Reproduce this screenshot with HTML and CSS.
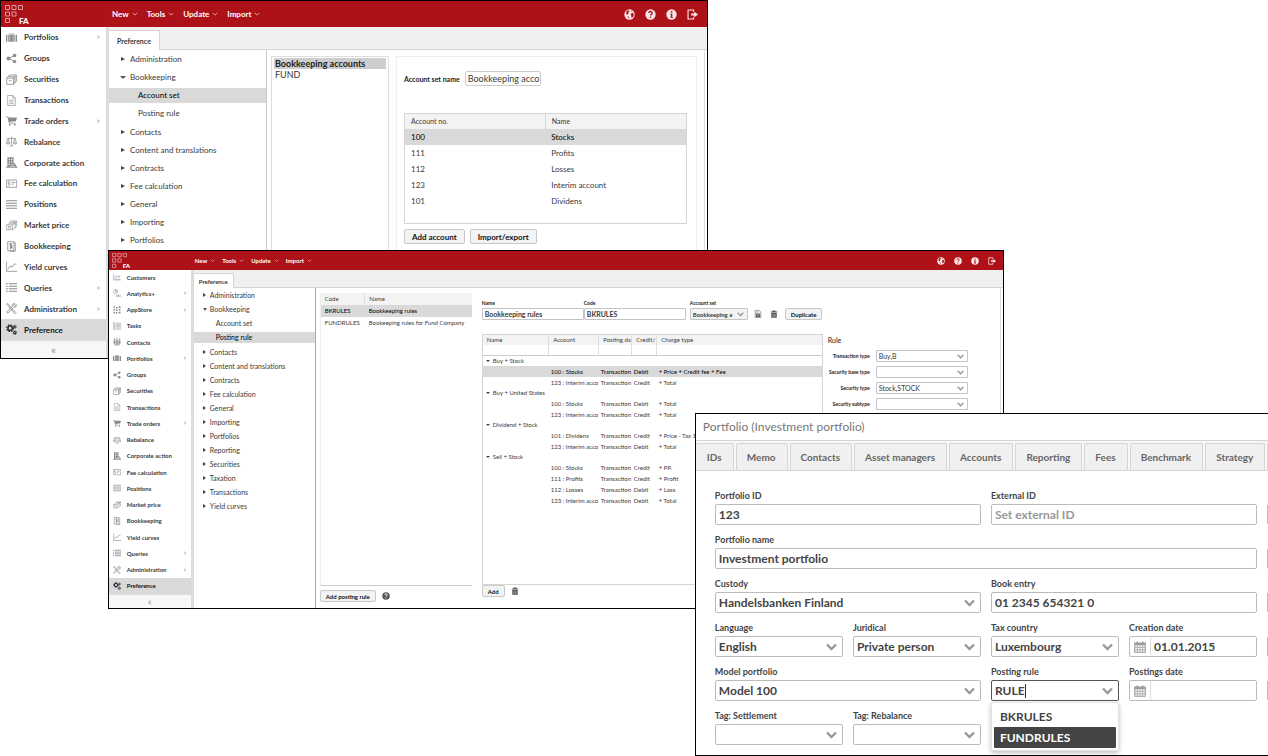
FILE: index.html
```html
<!DOCTYPE html>
<html lang="en">
<head>
<meta charset="utf-8">
<title>FA – Bookkeeping preferences</title>
<link rel="stylesheet" href="styles.css">
</head>
<body>
<svg class="sprite" aria-hidden="true">
  <symbol id="logo" viewBox="0 0 18 18"><g fill="none" stroke="currentColor" stroke-width="1"><path d="M.5.5h4v4h-4zM7 .5h4v4H7zM13.500.5h4v4h-4zM.5 7h4v4h-4zM7 7h4v4H7zM.5 13.500h4v4h-4z"/></g></symbol>
  <symbol id="down" viewBox="0 0 8 8"><path d="M1 2.500l3 3 3-3" fill="none" stroke="currentColor" stroke-width="1.200"/></symbol>
  <symbol id="globe" viewBox="0 0 16 16"><circle cx="8" cy="8" r="7.500" fill="currentColor"/><path d="M5 2l2.500 0 .5 1.500-2 1.500L6.500 7 4.500 8.500 3 7l.5-3.500zM10 7l2.500-1.500 2 2.500-1.500 3.500-2 1.500-.5-3zM10.500 2l2 1.500-1.500 .8zM4.500 10.500l3 1v2.500z" fill="var(--hole)"/></symbol>
  <symbol id="help" viewBox="0 0 16 16"><circle cx="8" cy="8" r="7.500" fill="currentColor"/><path d="M5.500 6c.2-3.300 5.200-3 5 0-.1 1.500-2.400 1.600-2.400 3.300" fill="none" stroke="var(--hole)" stroke-width="1.900"/><circle cx="8" cy="12" r="1.200" fill="var(--hole)"/></symbol>
  <symbol id="info" viewBox="0 0 16 16"><circle cx="8" cy="8" r="7.500" fill="currentColor"/><path d="M7 3h2.300v2.200H7zM6.200 6.500h3v5h1v1.300H6v-1.300h1V7.800h-.8z" fill="var(--hole)"/></symbol>
  <symbol id="exit" viewBox="0 0 16 16"><path d="M9.500 4V1.500h-8v13h8V12" fill="none" stroke="currentColor" stroke-width="1.600"/><path d="M6 6.700h4.500V4L16 8l-5.500 4V9.300H6z" fill="currentColor"/></symbol>
  <symbol id="case" viewBox="0 0 16 16"><path d="M0 4h2v10H0zM3.200 4h9.600v10H3.200zM14 4h2v10h-2zM5 2h6v2H9.800V3H6.200v1H5z" fill="currentColor"/><path d="M5.500 4v10M10.500 4v10" stroke="#fff" stroke-width=".7"/></symbol>
  <symbol id="share" viewBox="0 0 16 16"><path d="M13 3.500L3.500 8l9.500 4.500" fill="none" stroke="currentColor" stroke-width="1.300"/><circle cx="12.500" cy="3.500" r="2.500" fill="currentColor"/><circle cx="3.500" cy="8" r="2.800" fill="currentColor"/><circle cx="12.500" cy="12.500" r="2.500" fill="currentColor"/></symbol>
  <symbol id="safe" viewBox="0 0 16 16"><path d="M1 6h10v9H1zM1 6l4-4.500h10L11 6M15 1.500V11l-4 4M4 9.800h4M3 4h10M13 4v9" fill="none" stroke="currentColor" stroke-width="1.200"/></symbol>
  <symbol id="doc" viewBox="0 0 16 16"><path d="M2.500.7h7.500l3.500 3.500v11h-11zM9.800.7v3.800h3.700M5 7.500h6M5 10h6M5 12.500h6" fill="none" stroke="currentColor" stroke-width="1"/></symbol>
  <symbol id="cart" viewBox="0 0 16 16"><path d="M0 2h3.200l.5 1.500H16L14.500 9l-9.500 1 .3 1.300H14v1.200H4.200L2.200 3.200H0z" fill="currentColor"/><circle cx="5.500" cy="14" r="1.400" fill="currentColor"/><circle cx="12.800" cy="14" r="1.400" fill="currentColor"/></symbol>
  <symbol id="scale" viewBox="0 0 16 16"><path d="M8 1v13M5 14.500h6M2.500 3.500h11M3 3.500L.7 10M3 3.500L5.300 10M13 3.500L10.700 10M13 3.500l2.300 6.500M.5 10c.3 2.400 4.700 2.400 5 0zM10.500 10c.3 2.400 4.700 2.400 5 0z" fill="none" stroke="currentColor" stroke-width="1.100"/></symbol>
  <symbol id="building" viewBox="0 0 16 16"><path d="M2 .5h9V9h2v2h1.500v2H16v2.500H0V14h2z" fill="currentColor"/><path d="M4 2.500h1.500v2H4zM7.500 2.500H9v2H7.500zM4 6h1.500v2H4zM7.500 6H9v2H7.500zM4 9.500h1.500v2H4zM8 11h3v1H8zM5.500 13h8v.8h-8z" fill="#fff"/></symbol>
  <symbol id="fee" viewBox="0 0 16 16"><path d="M.5 3h15v10.500H.5zM5.500 5.500H3v2.300h2.300v2.700H2.500M8 6.500h5.500M8 9h3" fill="none" stroke="currentColor" stroke-width="1.200"/></symbol>
  <symbol id="lines" viewBox="0 0 16 16"><path d="M0 2.500h16M0 6.200h16M0 9.800h16M0 13.500h16" stroke="currentColor" stroke-width="1.500"/></symbol>
  <symbol id="market" viewBox="0 0 16 16"><path d="M.5 7h9v7h-9zM3 7l2-2.500h8.500L10 7M5 4.500l2-3h8.500v8l-6 4.500M15.500 1.500l-2 3v6.500M2.500 9.500h5M2.500 11.500h5M8 3h6" fill="none" stroke="currentColor"/></symbol>
  <symbol id="book" viewBox="0 0 16 16"><path d="M2.500 1h9v13h-9zM11.500 2.500h2V15H5" fill="none" stroke="currentColor" stroke-width="1.200"/><path d="M9 4H6v2.500h2.500V10H5.300M7 3v9" fill="none" stroke="currentColor" stroke-width="1.500"/></symbol>
  <symbol id="curve" viewBox="0 0 16 16"><path d="M.6 1v14H16M2.500 12l3.300-4.500 3 1.500 3-4.500H15" fill="none" stroke="currentColor" stroke-width="1.200"/></symbol>
  <symbol id="list" viewBox="0 0 16 16"><path d="M0 2.500h2.500M0 6.200h2.500M0 9.800h2.500M0 13.500h2.500M4 2.500h12M4 6.200h12M4 9.800h12M4 13.500h12" stroke="currentColor" stroke-width="1.700"/></symbol>
  <symbol id="tools" viewBox="0 0 16 16"><path d="M1 1.500l1.500-1L7 6.500 14.500 14 13 15.500 6 7.500zM15 2.500l-2.500 2L11 3.500 13 1c-3-.8-4.500 1.500-3.700 3.500L1 13l1.500 2 8.300-8.700c2.700.7 4.700-1.300 4.200-3.800z" fill="none" stroke="currentColor" stroke-width="1.200"/></symbol>
  <symbol id="cogs" viewBox="0 0 16 16"><circle cx="6" cy="6" r="3.200" fill="none" stroke="currentColor" stroke-width="2"/><circle cx="6" cy="6" r="4.900" fill="none" stroke="currentColor" stroke-width="1.800" stroke-dasharray="2.100 1.750"/><circle cx="12.800" cy="12.500" r="1.700" fill="none" stroke="currentColor" stroke-width="1.500"/><circle cx="12.800" cy="12.500" r="2.800" fill="none" stroke="currentColor" stroke-dasharray="1.300 .9"/><circle cx="13" cy="4" r="1.300" fill="none" stroke="currentColor" stroke-width="1.300"/><circle cx="13" cy="4" r="2.300" fill="none" stroke="currentColor" stroke-dasharray="1 .8"/></symbol>
  <symbol id="customers" viewBox="0 0 16 16"><path d="M1 2v12h15M3 11l2-5 2 3 2-5M10 6h5M10 8.500h4M3 12.500h11" fill="none" stroke="currentColor"/></symbol>
  <symbol id="analytics" viewBox="0 0 16 16"><path d="M9.500 6A4.300 4.300 0 1 1 5 1v5zM6.500 1c2 0 3.500 1.500 3.500 3.500H6.500z" fill="none" stroke="currentColor"/><path d="M6 13h2v2.500H6zM9.500 11h2v4.500h-2zM13 12.500h2v3h-2z" fill="currentColor"/></symbol>
  <symbol id="apps" viewBox="0 0 16 16"><path d="M1 1h3v3H1zM6 2h3v3H6zM11.500.5h3.500v3.500h-3.500zM1 6h3v3H1zM6 7h3v3H6zM11.500 6H15v3h-3.500zM1 11.500h3V15H1zM6 12h3v3H6zM11.500 11.500H15V15h-3.500z" fill="currentColor"/></symbol>
  <symbol id="tasks" viewBox="0 0 16 16"><path d="M.5 1.500h3v3h-3zM.5 6.500h3v3h-3zM.5 11.500h3v3h-3zM5.500 2h10.500M5.500 4.500H16M5.500 7H16M5.500 9.500H16M5.500 12H16M5.500 14.500H16" fill="none" stroke="currentColor"/></symbol>
  <symbol id="people" viewBox="0 0 16 16"><path d="M1 5h3.500v10H3v-4H1zM11.500 5H15v6h-2v4h-1.500zM5.500 4h2v11h-2zM8.500 4h2v11h-2z" fill="currentColor"/><circle cx="3" cy="2.500" r="1.500" fill="currentColor"/><circle cx="8" cy="2" r="1.600" fill="currentColor"/><circle cx="13" cy="2.500" r="1.500" fill="currentColor"/></symbol>
  <symbol id="trash" viewBox="0 0 16 16"><path d="M5 1h6v2h3.500v2h-13V3H5zM2.500 6h11v9.500h-11z" fill="currentColor"/><path d="M6 8v5.500M10 8v5.500" stroke="#fff"/></symbol>
  <symbol id="save" viewBox="0 0 16 16"><path d="M2.500.7h7.500l3.500 3.500v11h-11zM5 4h4" fill="none" stroke="currentColor" stroke-width="1.200"/><path d="M4 7h8v7H4z" fill="currentColor"/><path d="M5.500 9.500h5M5.500 11.500h5" stroke="#fff" stroke-width=".8"/></symbol>
  <symbol id="calendar" viewBox="0 0 16 16"><path d="M1 2.800h14V15H1z" fill="none" stroke="currentColor" stroke-width="1.400"/><path d="M1 3h14v2.500H1zM3.500.5h2v3h-2zM10.500.5h2v3h-2z" fill="currentColor"/><path d="M1 8.500h14M1 11.700h14M4.500 5.500V15M8 5.500V15M11.500 5.500V15" stroke="currentColor"/></symbol>
</svg>

<main class="desktop">
  <section class="window app app-large" aria-label="Account set preferences">
    <header class="topbar">
      <div class="brand"><svg class="brand-mark"><use href="#logo"/></svg><span class="brand-name">FA</span></div>
      <nav class="menus">
        <button class="menu">New <svg><use href="#down"/></svg></button>
        <button class="menu">Tools <svg><use href="#down"/></svg></button>
        <button class="menu">Update <svg><use href="#down"/></svg></button>
        <button class="menu">Import <svg><use href="#down"/></svg></button>
      </nav>
      <div class="actions">
        <button aria-label="Language"><svg><use href="#globe"/></svg></button>
        <button aria-label="Help"><svg><use href="#help"/></svg></button>
        <button aria-label="Info"><svg><use href="#info"/></svg></button>
        <button aria-label="Log out"><svg><use href="#exit"/></svg></button>
      </div>
    </header>
    <div class="app-body">
      <aside class="sidebar">
        <ul class="nav">
          <li class="more"><svg><use href="#case"/></svg>Portfolios</li>
          <li><svg><use href="#share"/></svg>Groups</li>
          <li><svg><use href="#safe"/></svg>Securities</li>
          <li><svg><use href="#doc"/></svg>Transactions</li>
          <li class="more"><svg><use href="#cart"/></svg>Trade orders</li>
          <li><svg><use href="#scale"/></svg>Rebalance</li>
          <li><svg><use href="#building"/></svg>Corporate action</li>
          <li><svg><use href="#fee"/></svg>Fee calculation</li>
          <li><svg><use href="#lines"/></svg>Positions</li>
          <li><svg><use href="#market"/></svg>Market price</li>
          <li><svg><use href="#book"/></svg>Bookkeeping</li>
          <li><svg><use href="#curve"/></svg>Yield curves</li>
          <li class="more"><svg><use href="#list"/></svg>Queries</li>
          <li class="more"><svg><use href="#tools"/></svg>Administration</li>
          <li class="current"><svg><use href="#cogs"/></svg>Preference</li>
        </ul>
        <button class="collapse" aria-label="Collapse menu">«</button>
      </aside>
      <div class="content">
        <div class="tabstrip"><button class="tab">Preference</button></div>
        <div class="panes">
          <ul class="tree">
            <li>Administration</li>
            <li class="open">Bookkeeping</li>
            <li class="branch"><ul><li class="chosen"><span>Account set</span></li><li><span>Posting rule</span></li></ul></li>
            <li>Contacts</li>
            <li>Content and translations</li>
            <li>Contracts</li>
            <li>Fee calculation</li>
            <li>General</li>
            <li>Importing</li>
            <li>Portfolios</li>
          </ul>
          <div class="accounts">
            <ul class="listbox" role="listbox" aria-label="Account sets">
              <li role="option" aria-selected="true">Bookkeeping accounts</li>
              <li role="option" aria-selected="false">FUND</li>
            </ul>
            <div class="account-panel">
              <div class="set-name">
                <label for="set-name">Account set name</label>
                <input id="set-name" value="Bookkeeping acco">
              </div>
              <div class="account-box">
                <table class="account-table">
                  <thead><tr><th>Account no.</th><th>Name</th></tr></thead>
                  <tbody>
                    <tr class="picked"><td>100</td><td>Stocks</td></tr>
                    <tr><td>111</td><td>Profits</td></tr>
                    <tr><td>112</td><td>Losses</td></tr>
                    <tr><td>123</td><td>Interim account</td></tr>
                    <tr><td>101</td><td>Dividens</td></tr>
                  </tbody>
                </table>
              </div>
              <div class="button-row"><button class="btn">Add account</button><button class="btn">Import/export</button></div>
            </div>
          </div>
        </div>
      </div>
    </div>
  </section>

  <section class="window app app-small" aria-label="Posting rule preferences">
    <header class="topbar">
      <div class="brand"><svg class="brand-mark"><use href="#logo"/></svg><span class="brand-name">FA</span></div>
      <nav class="menus">
        <button class="menu">New <svg><use href="#down"/></svg></button>
        <button class="menu">Tools <svg><use href="#down"/></svg></button>
        <button class="menu">Update <svg><use href="#down"/></svg></button>
        <button class="menu">Import <svg><use href="#down"/></svg></button>
      </nav>
      <div class="actions">
        <button aria-label="Language"><svg><use href="#globe"/></svg></button>
        <button aria-label="Help"><svg><use href="#help"/></svg></button>
        <button aria-label="Info"><svg><use href="#info"/></svg></button>
        <button aria-label="Log out"><svg><use href="#exit"/></svg></button>
      </div>
    </header>
    <div class="app-body">
      <aside class="sidebar">
        <ul class="nav">
          <li><svg><use href="#customers"/></svg>Customers</li>
          <li class="more"><svg><use href="#analytics"/></svg>Analytics+</li>
          <li class="more"><svg><use href="#apps"/></svg>AppStore</li>
          <li><svg><use href="#tasks"/></svg>Tasks</li>
          <li><svg><use href="#people"/></svg>Contacts</li>
          <li class="more"><svg><use href="#case"/></svg>Portfolios</li>
          <li><svg><use href="#share"/></svg>Groups</li>
          <li><svg><use href="#safe"/></svg>Securities</li>
          <li><svg><use href="#doc"/></svg>Transactions</li>
          <li class="more"><svg><use href="#cart"/></svg>Trade orders</li>
          <li><svg><use href="#scale"/></svg>Rebalance</li>
          <li><svg><use href="#building"/></svg>Corporate action</li>
          <li><svg><use href="#fee"/></svg>Fee calculation</li>
          <li><svg><use href="#lines"/></svg>Positions</li>
          <li><svg><use href="#market"/></svg>Market price</li>
          <li><svg><use href="#book"/></svg>Bookkeeping</li>
          <li><svg><use href="#curve"/></svg>Yield curves</li>
          <li class="more"><svg><use href="#list"/></svg>Queries</li>
          <li class="more"><svg><use href="#tools"/></svg>Administration</li>
          <li class="current"><svg><use href="#cogs"/></svg>Preference</li>
        </ul>
        <button class="collapse" aria-label="Collapse menu">«</button>
      </aside>
      <div class="content">
        <div class="tabstrip"><button class="tab">Preference</button></div>
        <div class="panes">
          <ul class="tree">
            <li>Administration</li>
            <li class="open">Bookkeeping</li>
            <li class="branch"><ul><li><span>Account set</span></li><li class="chosen"><span>Posting rule</span></li></ul></li>
            <li>Contacts</li>
            <li>Content and translations</li>
            <li>Contracts</li>
            <li>Fee calculation</li>
            <li>General</li>
            <li>Importing</li>
            <li>Portfolios</li>
            <li>Reporting</li>
            <li>Securities</li>
            <li>Taxation</li>
            <li>Transactions</li>
            <li>Yield curves</li>
          </ul>
          <div class="rules">
            <div class="rule-list">
              <div class="rule-box">
                <table class="rule-table">
                  <thead><tr><th>Code</th><th>Name</th></tr></thead>
                  <tbody>
                    <tr class="picked"><td>BKRULES</td><td>Bookkeeping rules</td></tr>
                    <tr><td>FUNDRULES</td><td>Bookeeping rules for Fund Company</td></tr>
                  </tbody>
                </table>
              </div>
              <div class="button-row"><button class="btn">Add posting rule</button><button class="icon-btn" aria-label="Help"><svg><use href="#help"/></svg></button></div>
            </div>
            <div class="rule-detail">
              <div class="rule-head">
                <div class="field"><label for="rule-name">Name</label><input id="rule-name" value="Bookkeeping rules"></div>
                <div class="field"><label for="rule-code">Code</label><input id="rule-code" value="BKRULES"></div>
                <div class="field field-set"><label for="rule-set">Account set</label><select id="rule-set"><option>Bookkeeping a</option></select></div>
                <button class="icon-btn" aria-label="Save"><svg><use href="#save"/></svg></button>
                <button class="icon-btn" aria-label="Delete rule"><svg><use href="#trash"/></svg></button>
                <button class="btn">Duplicate</button>
              </div>
              <div class="rule-main">
                <div class="posting">
                  <div class="posting-box">
                    <table class="posting-table">
                      <colgroup><col class="c-name"><col class="c-account"><col class="c-date"><col class="c-side"><col></colgroup>
                      <thead>
                        <tr><th>Name</th><th>Account</th><th>Posting da</th><th>Credit/</th><th>Charge type</th></tr>
                        <tr class="filters"><td></td><td></td><td></td><td></td><td></td></tr>
                      </thead>
                      <tbody>
                        <tr class="group"><td colspan="5">Buy + Stock</td></tr>
                        <tr class="picked"><td></td><td>100 : Stocks</td><td>Transaction</td><td>Debit</td><td>+ Price + Credit fee + Fee</td></tr>
                        <tr><td></td><td>123 : Interim acco</td><td>Transaction</td><td>Credit</td><td>+ Total</td></tr>
                        <tr class="group"><td colspan="5">Buy + United States</td></tr>
                        <tr><td></td><td>100 : Stocks</td><td>Transaction</td><td>Debit</td><td>+ Total</td></tr>
                        <tr><td></td><td>123 : Interim acco</td><td>Transaction</td><td>Credit</td><td>+ Total</td></tr>
                        <tr class="group"><td colspan="5">Dividend + Stock</td></tr>
                        <tr><td></td><td>101 : Dividens</td><td>Transaction</td><td>Credit</td><td>+ Price - Tax 1</td></tr>
                        <tr><td></td><td>123 : Interim acco</td><td>Transaction</td><td>Debit</td><td>+ Total</td></tr>
                        <tr class="group"><td colspan="5">Sell + Stock</td></tr>
                        <tr><td></td><td>100 : Stocks</td><td>Transaction</td><td>Credit</td><td>+ PP.</td></tr>
                        <tr><td></td><td>111 : Profits</td><td>Transaction</td><td>Credit</td><td>+ Profit</td></tr>
                        <tr><td></td><td>112 : Losses</td><td>Transaction</td><td>Debit</td><td>+ Loss</td></tr>
                        <tr><td></td><td>123 : Interim acco</td><td>Transaction</td><td>Debit</td><td>+ Total</td></tr>
                      </tbody>
                    </table>
                  </div>
                  <div class="button-row"><button class="btn">Add</button><button class="icon-btn" aria-label="Delete row"><svg><use href="#trash"/></svg></button></div>
                </div>
                <div class="rule-form">
                  <h2>Rule</h2>
                  <label for="tx-type">Transaction type</label><select id="tx-type"><option>Buy,B</option></select>
                  <label for="base-type">Security base type</label><select id="base-type"><option></option></select>
                  <label for="sec-type">Security type</label><select id="sec-type"><option>Stock,STOCK</option></select>
                  <label for="sub-type">Security subtype</label><select id="sub-type"><option></option></select>
                </div>
              </div>
            </div>
          </div>
        </div>
      </div>
    </div>
  </section>

  <section class="window portfolio" aria-label="Portfolio">
    <h1>Portfolio (Investment portfolio)</h1>
    <nav class="sections">
      <button>IDs</button><button>Memo</button><button>Contacts</button><button>Asset managers</button><button>Accounts</button><button>Reporting</button><button>Fees</button><button>Benchmark</button><button>Strategy</button><button aria-label="Next section"></button>
    </nav>
    <form class="details">
      <div class="field half"><label for="p-id">Portfolio ID</label><input id="p-id" value="123"></div>
      <div class="field half"><label for="p-ext">External ID</label><input id="p-ext" placeholder="Set external ID"></div>
      <span class="edge"></span>
      <div class="field full"><label for="p-name">Portfolio name</label><input id="p-name" value="Investment portfolio"></div>
      <span class="edge"></span>
      <div class="field half"><label for="p-custody">Custody</label><select id="p-custody"><option>Handelsbanken Finland</option></select></div>
      <div class="field half"><label for="p-book">Book entry</label><input id="p-book" value="01 2345 654321 0"></div>
      <span class="edge"></span>
      <div class="field"><label for="p-lang">Language</label><select id="p-lang"><option>English</option></select></div>
      <div class="field"><label for="p-jur">Juridical</label><select id="p-jur"><option>Private person</option></select></div>
      <div class="field"><label for="p-tax">Tax country</label><select id="p-tax"><option>Luxembourg</option></select></div>
      <div class="field"><label for="p-created">Creation date</label><div class="date"><svg><use href="#calendar"/></svg><input id="p-created" value="01.01.2015"></div></div>
      <span class="edge"></span>
      <div class="field half"><label for="p-model">Model portfolio</label><select id="p-model"><option>Model 100</option></select></div>
      <div class="field combo"><label for="p-rule">Posting rule</label><input id="p-rule" role="combobox" aria-expanded="true" aria-controls="rule-options" value="RULE"><span class="caret"></span>
        <ul class="options" id="rule-options" role="listbox"><li role="option">BKRULES</li><li role="option" aria-selected="true">FUNDRULES</li></ul>
      </div>
      <div class="field"><label for="p-postings">Postings date</label><div class="date"><svg><use href="#calendar"/></svg><input id="p-postings"></div></div>
      <span class="edge"></span>
      <div class="field"><label for="p-settle">Tag: Settlement</label><select id="p-settle"><option></option></select></div>
      <div class="field"><label for="p-rebal">Tag: Rebalance</label><select id="p-rebal"><option></option></select></div>
    </form>
  </section>
</main>
</body>
</html>
```
FILE: styles.css
```css
*, *::before, *::after { box-sizing: border-box; }
body { margin: 0; background: #fff; font-family: Lato, "Open Sans", sans-serif; color: #3a3a3a; }
ul { list-style: none; margin: 0; padding: 0; }
button, input, select { font: inherit; color: inherit; margin: 0; padding: 0; border: 0; background: none; border-radius: 0; min-width: 0; }
button { cursor: pointer; }
svg { display: block; flex: none; }
.sprite { position: absolute; width: 0; height: 0; }

.desktop { position: relative; height: 100vh; overflow: hidden; }
.window { position: absolute; background: #fff; border: 1px solid #000; overflow: hidden; }
.app { display: flex; flex-direction: column; height: 359px; }
.app-large { left: 0; top: 0; width: 55.8%; }
.app-small { left: 8.5%; top: 250px; width: 70.7%; }
.portfolio { left: 54.8%; right: 0; top: 413px; bottom: 0; border-right: 0; }

/* size scale of the two application windows */
.app-large { --bar: 26px; --text: 8px; --side: 105px; --icon: 11px; --foot: 18px; --row: 18px; --tree: 158px; --action: 11px; --strip: 23px; }
.app-small { --bar: 19px; --text: 6px; --side: 82px; --icon: 8px; --foot: 14px; --row: 14px; --tree: 122px; --action: 8px; --strip: 18px; }
.app { font-size: var(--text); }

.topbar { flex: none; height: var(--bar); display: flex; align-items: center; background: #ae1219; color: #fff; --hole: #ae1219; }
.brand { position: relative; width: var(--side); align-self: stretch; }
.brand-mark { width: 18px; height: 18px; margin: 4px 0 0 4px; color: #e09a9d; }
.brand-name { position: absolute; left: 18px; bottom: 1px; font-weight: 900; line-height: 9px; }
.menus { display: flex; gap: 9px; padding-left: 6px; flex: 1; }
.menu { display: flex; align-items: center; gap: 3px; font-weight: 700; }
.menu svg { width: 6px; height: 6px; color: #e5a9ab; }
.actions { display: flex; gap: 10px; padding-right: 9px; color: #fbe6e7; }
.actions svg { width: var(--action); height: var(--action); }
.app-small .brand-mark { width: 15px; height: 15px; margin: 2px 0 0 3px; }
.app-small .brand-name { left: 14px; bottom: 0; line-height: 8px; }
.app-small .menus { gap: 7px; padding-left: 4px; }
.app-small .menu svg { width: 5px; height: 5px; }
.app-small .actions { gap: 9px; padding-right: 7px; }

.app-body { flex: 1; min-height: 0; display: flex; }
.sidebar { flex: none; width: var(--side); display: flex; flex-direction: column; }
.nav { flex: 1; display: grid; grid-auto-rows: 1fr; font-weight: 700; }
.nav li { display: flex; align-items: center; gap: 7px; padding-left: 5px; min-height: 0; }
.nav svg { width: var(--icon); height: var(--icon); color: #8c8c8c; }
.nav .more::after { content: ""; margin: 0 5px 0 auto; border: solid transparent; border-width: 2px 0 2px 4px; border-left-color: #d5d5d5; }
.nav .current { background: #d9d9d9; color: #111; }
.nav .current svg { color: #222; }
.app-small .nav { margin-top: -1px; }
.app-small .nav li { gap: 6px; padding-left: 4px; }
.app-small .nav .more::after { border-width: 2px 0 2px 3px; margin-right: 4px; }
.collapse { height: var(--foot); background: #f7f7f7; border-top: 1px solid #ddd; color: #999; font-size: 12px; line-height: 12px; }
.app-small .collapse { font-size: 9px; line-height: 9px; }

.content { flex: 1; min-width: 0; display: flex; flex-direction: column; border-left: 3px solid #dcdcdc; }
.tabstrip { flex: none; height: var(--strip); background: #f0f0f0; border-bottom: 1px solid #d5d5d5; padding-top: 3px; display: flex; }
.tab { background: #fff; border: 1px solid #d5d5d5; border-bottom: 0; border-left: 0; font-size: 7px; font-weight: 700; padding: 0 8px; margin-bottom: -1px; }
.app-small .tab { padding: 0 5px; font-size: 6px; }
.panes { flex: 1; min-height: 0; display: flex; margin-right: 2px; border-right: 1px solid #ddd; }
.tree { flex: none; width: var(--tree); line-height: var(--row); border-right: 1px solid #ccc; }
.tree > li:not(.branch) { display: flex; align-items: center; gap: 5px; padding-left: 12px; }
.tree > li:not(.branch)::before { content: ""; width: 4px; border: solid transparent; border-width: 2px 0 2px 4px; border-left-color: #444; }
.tree > .open:not(.branch)::before { width: 6px; border-width: 3px 3px 0; border-color: #555 transparent transparent; margin: 0 -1px; }
.branch { padding: 0 0 1px; }
.branch li { height: var(--row); display: flex; align-items: center; }
.branch span { flex: 1; padding-left: 29px; line-height: 15px; }
.branch .chosen span { background: #d9d9d9; color: #000; }
.app-small .tree { border-right-color: #aaa; font-size: 7px; }
.app-small .tree > li:not(.branch) { padding-left: 9px; gap: 4px; }
.app-small .tree > li:not(.branch)::before { width: 3px; border-left-width: 3px; }
.app-small .tree > .open:not(.branch)::before { width: 4px; border-width: 3px 2px 0; margin: 0 -1px 0 0; }
.app-small .branch span { padding-left: 22px; line-height: 11px; }

.btn { background: #f3f3f3; border: 1px solid #c8c8c8; border-radius: 2px; font-weight: 700; color: #111; white-space: nowrap; }
.button-row { display: flex; align-items: center; }
.icon-btn svg { width: 8px; height: 8px; color: #555; --hole: #fff; }
table { border-collapse: collapse; table-layout: fixed; width: 100%; }
th, td { padding: 0; text-align: left; white-space: nowrap; overflow: hidden; }
th { background: #f3f3f3; font-weight: 400; }
.picked { background: #d9d9d9; color: #000; }
select { appearance: none; background: no-repeat right 3px center url("data:image/svg+xml,%3Csvg xmlns='http://www.w3.org/2000/svg' width='7' height='5'%3E%3Cpath d='M.7.8l2.8 3 2.800-3' fill='none' stroke='%23999' stroke-width='1.300'/%3E%3C/svg%3E"); }

/* account sets */
.accounts { flex: 1; min-width: 0; display: flex; gap: 7px; padding: 6px 7px 0 4px; }
.listbox { width: 118px; border: 1px solid #ddd; padding: 1px 2px; font-size: 9px; line-height: 11px; }
.listbox li { padding-left: 1px; white-space: nowrap; }
.listbox [aria-selected="true"] { background: #cdcdcd; color: #222; font-weight: 700; }
.account-panel { flex: 1; border: 1px solid #eee; padding: 14px 9px 0 7px; }
.set-name { display: flex; align-items: center; gap: 5px; margin-bottom: 27px; }
.set-name label { font-size: 7px; font-weight: 700; color: #222; }
.set-name input { width: 76px; height: 15px; border: 1px solid #ccc; border-radius: 2px; padding-left: 2px; font-size: 9px; }
.account-box { height: 111px; border: 1px solid #d5d5d5; }
.account-table { line-height: 16px; }
.account-table th { font-size: 7px; line-height: 15px; border-right: 1px solid #d5d5d5; }
.account-table th:last-child { border-right: 0; }
.account-table th, .account-table td { padding-left: 6px; }
.account-panel .button-row { gap: 5px; margin-top: 5px; }
.account-panel .btn { height: 15px; padding: 0 7px; }

/* posting rules */
.rules { flex: 1; min-width: 0; display: flex; gap: 10px; padding: 5px 0 0 4px; }
.rule-list { flex: none; width: 152px; display: flex; flex-direction: column; }
.rule-box { flex: 1; border-bottom: 1px solid #ccc; border-left: 1px solid #eee; }
.rule-table { line-height: 12px; }
.rule-table th:first-child, .rule-table td:first-child { width: 44px; }
.rule-table th + th { border-left: 1px solid #ddd; }
.rule-table th, .rule-table td { padding-left: 4px; }
.rule-list .button-row { padding: 4px 0 6px; gap: 6px; }
.app-small .btn { font-size: 6px; height: 12px; padding: 0 5px; }
.rule-detail { flex: 1; min-width: 0; display: flex; flex-direction: column; padding-top: 5px; }
.rule-head { display: flex; align-items: flex-end; margin-bottom: 14px; }
.rule-head .field { display: grid; width: 102px; }
.rule-head label, .rule-form label { font-size: 5px; line-height: 10px; font-weight: 700; color: #222; }
.rule-head input, .rule-head select, .rule-form select { height: 12px; border: 1px solid #c4c4c4; border-radius: 1px; padding-left: 2px; font-size: 7px; }
.rule-head input, .rule-head select { font-weight: 700; }
.rule-head .field-set { width: 58px; margin: 0 2px 0 4px; }
.rule-head select { background-color: #f3f3f3; font-size: 6px; }
.rule-head .icon-btn { padding: 2px 4px; }
.rule-head .btn { margin-left: 3px; }
.rule-main { flex: 1; display: flex; gap: 5px; }
.posting { width: 341px; display: flex; flex-direction: column; }
.posting-box { flex: 1; border: 1px solid #d5d5d5; }
.posting .button-row { padding-bottom: 11px; gap: 6px; }
.posting-table { line-height: 11px; }
.posting-table .c-name { width: 66px; }
.posting-table .c-account { width: 50px; }
.posting-table .c-date { width: 33px; }
.posting-table .c-side { width: 25px; }
.posting-table th { padding-left: 4px; line-height: 10px; }
.posting-table td { padding-left: 2px; }
.posting-table th + th, .filters td + td { border-left: 1px solid #ddd; }
.filters td { height: 10px; border-bottom: 1px solid #ccc; }
.group { line-height: 10px; }
.group td::before { content: ""; display: inline-block; margin: 0 3px 1px 1px; border: solid transparent; border-width: 2px 2px 0; border-top-color: #444; }
.rule-form { display: grid; grid-template-columns: 42px 92px; gap: 4px 6px; align-content: start; align-items: center; }
.rule-form h2 { grid-column: 1 / -1; margin: 0; font-size: 7px; line-height: 12px; font-weight: 400; color: #222; }
.rule-form label { text-align: right; white-space: nowrap; }

/* portfolio window */
.portfolio { font-size: 12px; font-weight: 700; }
.portfolio h1 { margin: 0; padding-left: 7px; font-size: 12px; line-height: 26px; font-weight: 400; color: #777; }
.sections { display: flex; gap: 2px; padding-top: 2px; background: #f7f7f7; border-top: 1px solid #d5d5d5; border-bottom: 1px solid #d5d5d5; overflow: hidden; }
.sections button { flex: none; height: 27px; padding: 0 11px 0 10px; font-size: 10px; font-weight: 700; color: #666; background: #f0f0f0; border: 1px solid #d5d5d5; border-bottom: 0; border-radius: 2px 2px 0 0; }
.sections button:first-child { border-left: 0; padding-left: 11px; }
.details { display: grid; grid-template-columns: repeat(4, minmax(0, 1fr)) 20px; gap: 7px 10px; padding: 17px 0 0 19px; margin-right: -19px; color: #444; }
.portfolio .field { display: grid; min-width: 0; }
.half { grid-column: span 2; }
.full { grid-column: span 4; }
.portfolio label { font-size: 9px; line-height: 16px; }
.details input, .details select { height: 21px; width: 100%; border: 1px solid #bbb; border-radius: 2px; padding-left: 3px; }
.details select { background-position: right 5px center; background-image: url("data:image/svg+xml,%3Csvg xmlns='http://www.w3.org/2000/svg' width='11' height='8'%3E%3Cpath d='M1 1.500l4.500 4.500 4.500-4.500' fill='none' stroke='%23999' stroke-width='2.400'/%3E%3C/svg%3E"); }
.details ::placeholder { color: #999; opacity: 1; }
.edge { height: 21px; align-self: end; border: 1px solid #bbb; border-radius: 2px; }
.date { display: flex; align-items: center; height: 21px; border: 1px solid #bbb; border-radius: 2px; }
.date svg { width: 12px; height: 12px; margin: 0 4px; color: #999; }
.details .date input { height: 19px; border: 0; border-left: 1px solid #ddd; }
.combo { position: relative; }
.details .combo input { border-color: #555; background: no-repeat right 5px center url("data:image/svg+xml,%3Csvg xmlns='http://www.w3.org/2000/svg' width='11' height='8'%3E%3Cpath d='M1 1.500l4.500 4.500 4.500-4.500' fill='none' stroke='%23999' stroke-width='2.400'/%3E%3C/svg%3E"); }
.caret { position: absolute; left: 34px; top: 20px; width: 1px; height: 14px; background: #333; }
.options { position: absolute; left: 0; right: 0; top: 38px; padding: 3px 2px 2px; background: #fff; border: 1px solid #e2e2e2; border-radius: 2px; box-shadow: 0 2px 5px rgba(0, 0, 0, .25); line-height: 21px; }
.options li { padding-left: 6px; border-radius: 1px; }
.options [aria-selected="true"] { background: #444; color: #fff; }
```
